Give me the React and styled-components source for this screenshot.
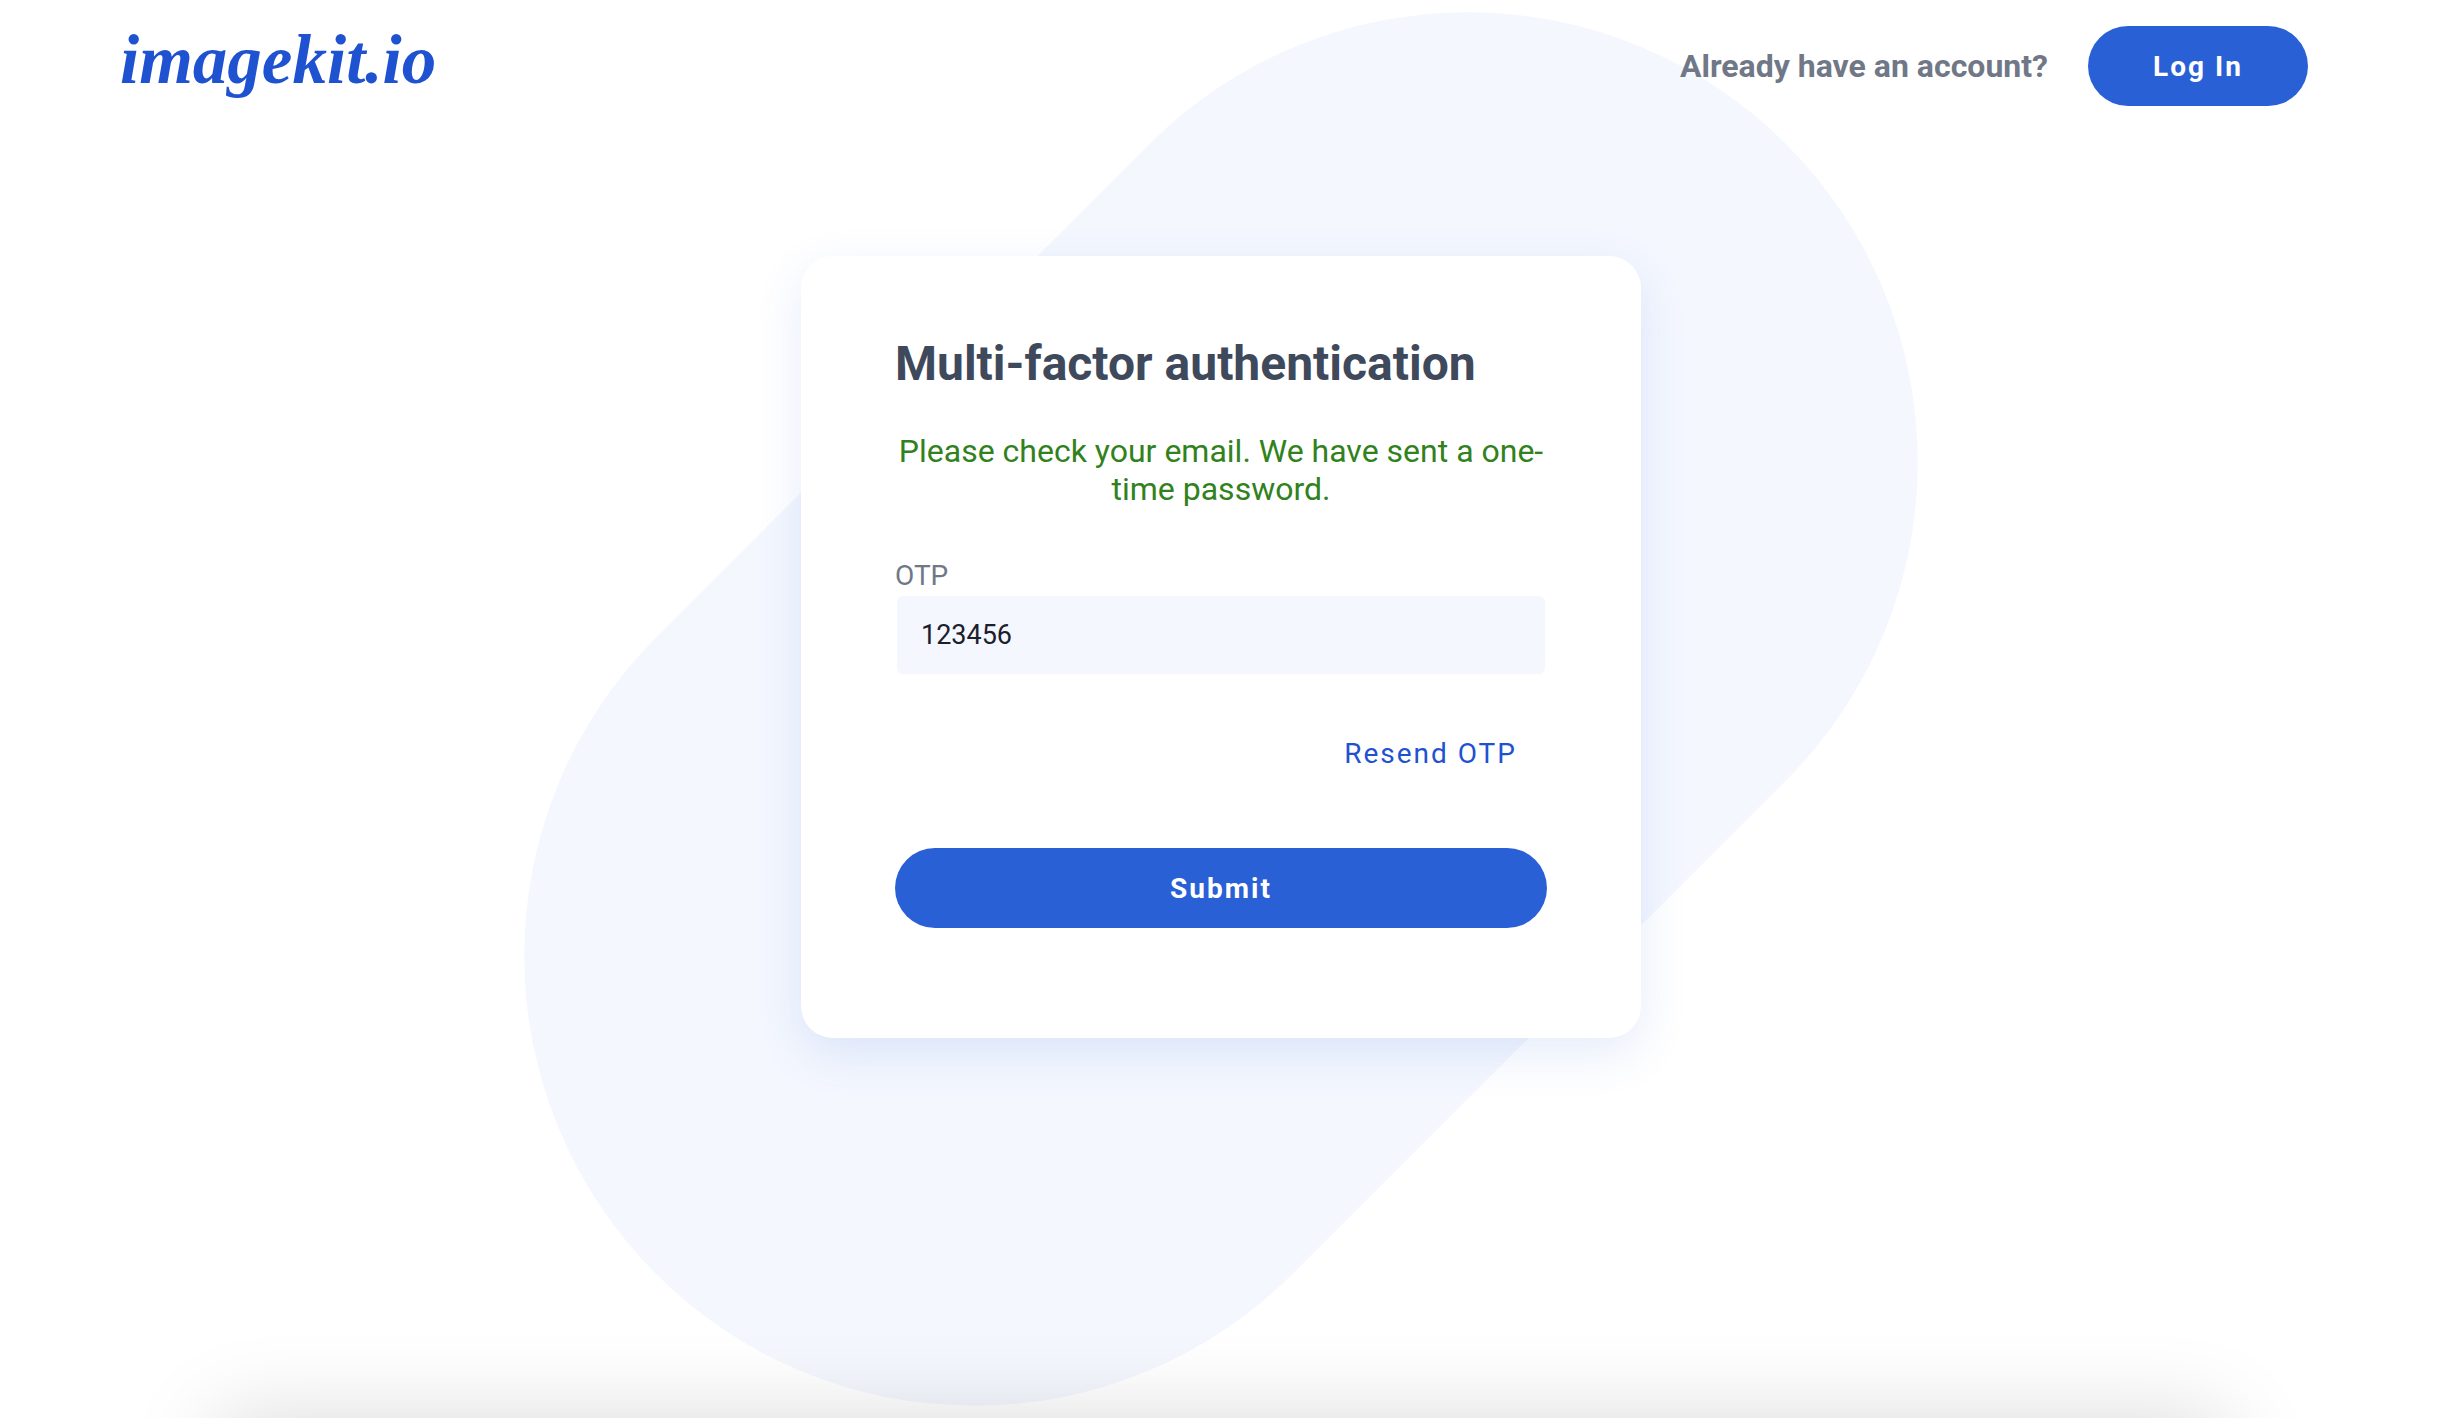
import React, { useState } from "react";
import styled, { createGlobalStyle, css } from "styled-components";

const GlobalStyle = createGlobalStyle`
  *, *::before, *::after { box-sizing: border-box; }
  body {
    margin: 0;
    background: #fff;
    font-family: Roboto, "Liberation Sans", sans-serif;
  }
`;

const Page = styled.div`
  position: relative;
  z-index: 0;
  min-height: 100vh;
  overflow: hidden;
  display: flex;
  flex-direction: column;
`;

const Blob = styled.div`
  position: absolute;
  z-index: -1;
  top: 50%;
  left: 50%;
  width: 1598px;
  height: 900px;
  border-radius: 450px;
  background: #f4f7fe;
  transform: translate(-50%, -50%) rotate(-45deg);
`;

const BottomShade = styled.div`
  position: absolute;
  top: 100%;
  left: 216px;
  right: 216px;
  height: 200px;
  box-shadow: 0 0 88px rgba(0, 0, 0, 0.15);
  pointer-events: none;
`;

const Header = styled.header`
  display: flex;
  align-items: flex-start;
  justify-content: space-between;
  padding: 26px 134px 0 120px;
`;

const Logo = styled.a`
  color: #1f52d0;
  font-family: "Liberation Serif", serif;
  font-size: 69px;
  font-style: italic;
  font-weight: 700;
  line-height: 68px;
  text-decoration: none;
`;

const Account = styled.div`
  display: flex;
  align-items: center;
  gap: 40px;
`;

const AccountText = styled.span`
  color: #707887;
  font-size: 32px;
  font-weight: 700;
  line-height: 38px;
`;

const pill = css`
  height: 80px;
  border: 0;
  border-radius: 40px;
  background: #2a60d6;
  color: #fff;
  font-family: inherit;
  font-size: 28px;
  font-weight: 700;
  letter-spacing: 2px;
  cursor: pointer;
`;

const LoginLink = styled.a`
  ${pill}
  display: flex;
  align-items: center;
  justify-content: center;
  width: 220px;
  text-decoration: none;
`;

const Main = styled.main`
  display: flex;
  justify-content: center;
  padding: 150px 24px 120px;
`;

const Card = styled.form`
  display: flex;
  flex-direction: column;
  width: 100%;
  max-width: 840px;
  padding: 80px 94px 110px;
  border-radius: 32px;
  background: #fff;
  box-shadow: 0 16px 48px rgba(42, 96, 214, 0.12);
`;

const Title = styled.h1`
  margin: 0 0 40px;
  color: #3f495c;
  font-size: 48px;
  font-weight: 700;
  line-height: 56px;
`;

const Message = styled.p`
  margin: 0 0 52px;
  color: #31811d;
  font-size: 32px;
  line-height: 38px;
  text-align: center;
`;

const Field = styled.div`
  display: flex;
  flex-direction: column;
  gap: 4px;
`;

const Label = styled.label`
  color: #707887;
  font-size: 28px;
  line-height: 32px;
`;

const Input = styled.input`
  height: 78px;
  margin: 0 2px;
  padding: 0 24px;
  border: 0;
  border-radius: 6px;
  background: #f4f7fe;
  color: #1c202b;
  font-family: inherit;
  font-size: 27px;
  outline: none;
`;

const ResendButton = styled.button`
  align-self: flex-end;
  margin: 48px 0 62px;
  padding: 16px 30px;
  border: 0;
  background: transparent;
  color: #1f52d0;
  font-family: inherit;
  font-size: 28px;
  letter-spacing: 2px;
  line-height: 32px;
  cursor: pointer;
`;

const SubmitButton = styled.button`
  ${pill}
  width: 100%;
`;

export default function App() {
  const [otp, setOtp] = useState("123456");

  return (
    <Page>
      <GlobalStyle />
      <Blob />
      <Header>
        <Logo href="#">imagekit.io</Logo>
        <Account>
          <AccountText>Already have an account?</AccountText>
          <LoginLink href="#login">Log In</LoginLink>
        </Account>
      </Header>
      <Main>
        <Card onSubmit={(event) => event.preventDefault()}>
          <Title>Multi-factor authentication</Title>
          <Message>Please check your email. We have sent a one-time password.</Message>
          <Field>
            <Label htmlFor="otp">OTP</Label>
            <Input
              id="otp"
              type="text"
              inputMode="numeric"
              value={otp}
              onChange={(event) => setOtp(event.target.value)}
            />
          </Field>
          <ResendButton type="button">Resend OTP</ResendButton>
          <SubmitButton type="submit">Submit</SubmitButton>
        </Card>
      </Main>
      <BottomShade />
    </Page>
  );
}
